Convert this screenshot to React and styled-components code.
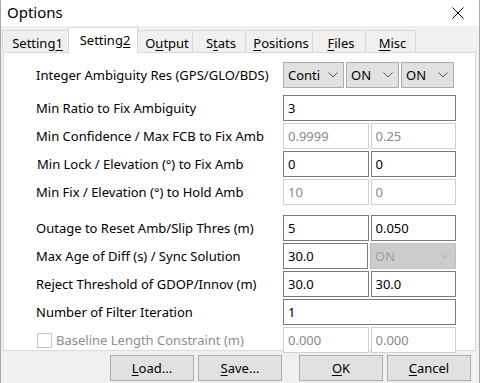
import React from "react";
import styled, { createGlobalStyle } from "styled-components";

const GlobalStyle = createGlobalStyle`
  html, body {
    margin: 0;
    padding: 0;
    background: #f0f0f0;
  }
  * {
    box-sizing: border-box;
  }
`;

const tabs = [
  { label: "Setting", key: "1", after: "", width: 67 },
  { label: "Setting", key: "2", after: "", width: 70, active: true },
  { label: "O", key: "u", after: "tput", width: 56 },
  { label: "S", key: "t", after: "ats", width: 54 },
  { label: "", key: "P", after: "ositions", width: 68 },
  { label: "", key: "F", after: "iles", width: 54 },
  { label: "", key: "M", after: "isc", width: 51 },
];

const Chevron = ({ color }) => (
  <svg width="10" height="6" viewBox="0 0 10 6">
    <polyline points="0.5,0.5 5,5 9.5,0.5" fill="none" stroke={color} strokeWidth="1" />
  </svg>
);

const Combo = ({ value, width, disabled }) => (
  <ComboBox $w={width} $disabled={disabled}>
    <span>{value}</span>
    <Chevron color={disabled ? "#b4b4b4" : "#5a5a5a"} />
  </ComboBox>
);

const App = () => {
  return (
    <>
      <GlobalStyle />
      <Window>
        <TitleBar>
          <Title>Options</Title>
          <svg width="12" height="12" viewBox="0 0 12 12">
            <line x1="0.5" y1="0.5" x2="11.5" y2="11.5" stroke="#000" strokeWidth="1" />
            <line x1="11.5" y1="0.5" x2="0.5" y2="11.5" stroke="#000" strokeWidth="1" />
          </svg>
        </TitleBar>

        <TabStrip>
          {tabs.map((t, i) => (
            <Tab key={i} $active={t.active} $w={t.width}>
              {t.label}
              <u>{t.key}</u>
              {t.after}
            </Tab>
          ))}
        </TabStrip>

        <Panel>
          <Row>
            <Label>Integer Ambiguity Res (GPS/GLO/BDS)</Label>
            <Fields>
              <Combo value="Conti" width={61} />
              <Combo value="ON" width={53} />
              <Combo value="ON" width={53} />
            </Fields>
          </Row>
          <Row $mt={5}>
            <Label>Min Ratio to Fix Ambiguity</Label>
            <Fields>
              <Edit readOnly value="3" />
            </Fields>
          </Row>
          <Row>
            <Label>Min Confidence / Max FCB to Fix Amb</Label>
            <Fields>
              <Edit disabled value="0.9999" />
              <Edit disabled value="0.25" />
            </Fields>
          </Row>
          <Row>
            <Label $shift={1}>Min Lock / Elevation (°) to Fix Amb</Label>
            <Fields>
              <Edit readOnly value="0" />
              <Edit readOnly value="0" />
            </Fields>
          </Row>
          <Row>
            <Label>Min Fix / Elevation (°) to Hold Amb</Label>
            <Fields>
              <Edit disabled value="10" />
              <Edit disabled value="0" />
            </Fields>
          </Row>

          <Row $mt={8}>
            <Label>Outage to Reset Amb/Slip Thres (m)</Label>
            <Fields>
              <Edit readOnly value="5" />
              <Edit readOnly value="0.050" />
            </Fields>
          </Row>
          <Row>
            <Label>Max Age of Diff (s) / Sync Solution</Label>
            <Fields>
              <Edit readOnly value="30.0" />
              <Combo value="ON" width={86} disabled />
            </Fields>
          </Row>
          <Row>
            <Label>Reject Threshold of GDOP/Innov (m)</Label>
            <Fields>
              <Edit readOnly value="30.0" />
              <Edit readOnly value="30.0" />
            </Fields>
          </Row>
          <Row>
            <Label>Number of Filter Iteration</Label>
            <Fields>
              <Edit readOnly value="1" />
            </Fields>
          </Row>
          <Row>
            <CheckLabel>
              <CheckBox />
              Baseline Length Constraint (m)
            </CheckLabel>
            <Fields>
              <Edit disabled value="0.000" />
              <Edit disabled value="0.000" />
            </Fields>
          </Row>
        </Panel>

        <ButtonBar>
          <Button>
            <u>L</u>oad...
          </Button>
          <Button>
            <u>S</u>ave...
          </Button>
          <Button $gap={17}>
            <u>O</u>K
          </Button>
          <Button>
            <u>C</u>ancel
          </Button>
        </ButtonBar>
      </Window>
    </>
  );
};

export default App;

const Window = styled.div`
  width: 480px;
  height: 383px;
  overflow: hidden;
  display: flex;
  flex-direction: column;
  background: #f0f0f0;
  border-left: 1px solid #a8a8a8;
  border-right: 1px solid #a8a8a8;
  font-family: "Noto Sans", "Open Sans", sans-serif;
  font-size: 13px;
  color: #000;
`;

const TitleBar = styled.div`
  height: 26px;
  flex-shrink: 0;
  background: #fff;
  display: flex;
  align-items: center;
  justify-content: space-between;
  padding: 0 15px 0 6px;
`;

const Title = styled.span`
  font-size: 15px;
  line-height: 1;
  margin-top: -2px;
`;

const TabStrip = styled.div`
  height: 25px;
  margin-top: 1px;
  padding-left: 1px;
  display: flex;
  align-items: flex-end;
  flex-shrink: 0;
`;

const Tab = styled.div`
  width: ${(p) => p.$w}px;
  height: ${(p) => (p.$active ? 26 : 22)}px;
  margin-left: -1px;
  margin-bottom: ${(p) => (p.$active ? -1 : 0)}px;
  &:first-child {
    margin-left: 0;
  }
  position: relative;
  z-index: ${(p) => (p.$active ? 2 : 1)};
  background: ${(p) => (p.$active ? "#fff" : "#f0f0f0")};
  border: 1px solid #d9d9d9;
  border-bottom: none;
  display: flex;
  justify-content: center;
  align-items: ${(p) => (p.$active ? "flex-start" : "center")};
  padding-top: ${(p) => (p.$active ? 4 : 2)}px;
  padding-left: 4px;
  line-height: 16px;
  white-space: nowrap;
  u {
    text-underline-offset: 2px;
  }
`;

const Panel = styled.div`
  margin: 0 3px 0 2px;
  height: 299px;
  flex-shrink: 0;
  background: #fff;
  border: 1px solid #d9d9d9;
  padding: 9px 0 0 32px;
  display: flex;
  flex-direction: column;
  gap: 2px;
`;

const Row = styled.div`
  display: grid;
  grid-template-columns: 247px 173px;
  align-items: center;
  height: 26px;
  margin-top: ${(p) => p.$mt || 0}px;
`;

const Label = styled.span`
  padding-left: ${(p) => p.$shift || 0}px;
  white-space: nowrap;
  line-height: 16px;
`;

const CheckLabel = styled.span`
  display: flex;
  align-items: center;
  gap: 4px;
  padding-left: 1px;
  color: #8d8d8d;
  white-space: nowrap;
`;

const CheckBox = styled.span`
  width: 15px;
  height: 15px;
  border: 1px solid #c4c4c4;
  background: #fff;
`;

const Fields = styled.div`
  display: flex;
  gap: 2px;
  height: 26px;
`;

const Edit = styled.input`
  flex: 1;
  min-width: 0;
  height: 26px;
  margin: 0;
  padding: 0 4px;
  border: 1px solid #7a7a7a;
  background: #fff;
  font-family: inherit;
  font-size: 13px;
  color: #000;
  outline: none;
  &:disabled {
    border-color: #cfcfcf;
    color: #8a8a8a;
    -webkit-text-fill-color: #8a8a8a;
    opacity: 1;
  }
`;

const ComboBox = styled.div`
  width: ${(p) => p.$w}px;
  flex-shrink: 0;
  height: 26px;
  display: flex;
  align-items: center;
  justify-content: space-between;
  padding: 0 5px 0 4px;
  background: ${(p) => (p.$disabled ? "#cccccc" : "#e1e1e1")};
  border: 1px solid ${(p) => (p.$disabled ? "#bfbfbf" : "#adadad")};
  color: ${(p) => (p.$disabled ? "#a0a0a0" : "#000")};
`;

const ButtonBar = styled.div`
  display: flex;
  justify-content: flex-end;
  gap: 4px;
  margin-top: 4px;
  padding-right: 8px;
`;

const Button = styled.div`
  width: 84px;
  height: 26px;
  margin-left: ${(p) => (p.$gap ? p.$gap - 4 : 0)}px;
  display: flex;
  align-items: center;
  justify-content: center;
  background: #e1e1e1;
  border: 1px solid #adadad;
  u {
    text-underline-offset: 2px;
  }
`;
